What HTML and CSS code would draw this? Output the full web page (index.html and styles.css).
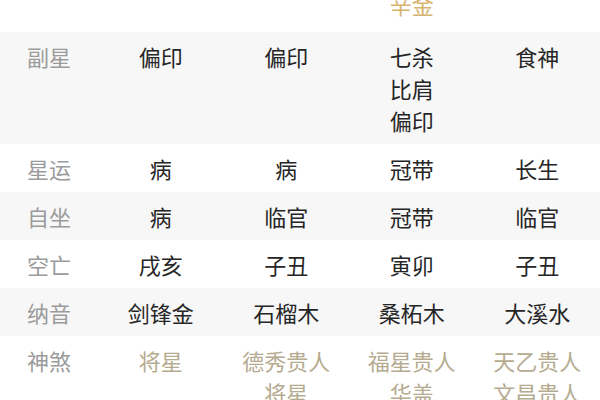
FILE: index.html
```html
<!DOCTYPE html>
<html lang="zh-CN">
<head>
<meta charset="utf-8">
<title>八字排盘</title>
<link rel="stylesheet" href="styles.css">
</head>
<body>
<div class="chart">
  <div class="row row-top">
    <div class="label"></div>
    <div class="cell"></div>
    <div class="cell"></div>
    <div class="cell gold">辛金</div>
    <div class="cell"></div>
  </div>
  <div class="row shade">
    <div class="label">副星</div>
    <div class="cell">偏印</div>
    <div class="cell">偏印</div>
    <div class="cell">七杀<br>比肩<br>偏印</div>
    <div class="cell">食神</div>
  </div>
  <div class="row">
    <div class="label">星运</div>
    <div class="cell">病</div>
    <div class="cell">病</div>
    <div class="cell">冠带</div>
    <div class="cell">长生</div>
  </div>
  <div class="row shade">
    <div class="label">自坐</div>
    <div class="cell">病</div>
    <div class="cell">临官</div>
    <div class="cell">冠带</div>
    <div class="cell">临官</div>
  </div>
  <div class="row">
    <div class="label">空亡</div>
    <div class="cell">戌亥</div>
    <div class="cell">子丑</div>
    <div class="cell">寅卯</div>
    <div class="cell">子丑</div>
  </div>
  <div class="row shade">
    <div class="label">纳音</div>
    <div class="cell">剑锋金</div>
    <div class="cell">石榴木</div>
    <div class="cell">桑柘木</div>
    <div class="cell">大溪水</div>
  </div>
  <div class="row">
    <div class="label">神煞</div>
    <div class="cell sha">将星</div>
    <div class="cell sha">德秀贵人<br>将星</div>
    <div class="cell sha">福星贵人<br>华盖</div>
    <div class="cell sha">天乙贵人<br>文昌贵人</div>
  </div>
</div>
</body>
</html>
```

FILE: styles.css
```css
html, body {
  margin: 0;
  padding: 0;
  background: #ffffff;
}

body {
  width: 600px;
  height: 400px;
  overflow: hidden;
  font-family: "Noto Sans CJK SC", "Noto Sans", sans-serif;
  font-size: 22px;
  line-height: 32px;
  color: #262626;
}

.chart {
  display: flex;
  flex-direction: column;
}

.row {
  display: grid;
  grid-template-columns: 98px repeat(4, 1fr);
  align-items: start;
  padding: 8px 0;
}

.row-top {
  margin-top: -12px;
  padding-top: 0;
  padding-bottom: 12px;
}

.shade {
  background: #f7f7f7;
}

.label {
  text-align: center;
  color: #9b9b9b;
}

.cell {
  text-align: center;
  white-space: nowrap;
}

.gold {
  color: #d6b36f;
}

.sha {
  color: #b5ab90;
}
```
